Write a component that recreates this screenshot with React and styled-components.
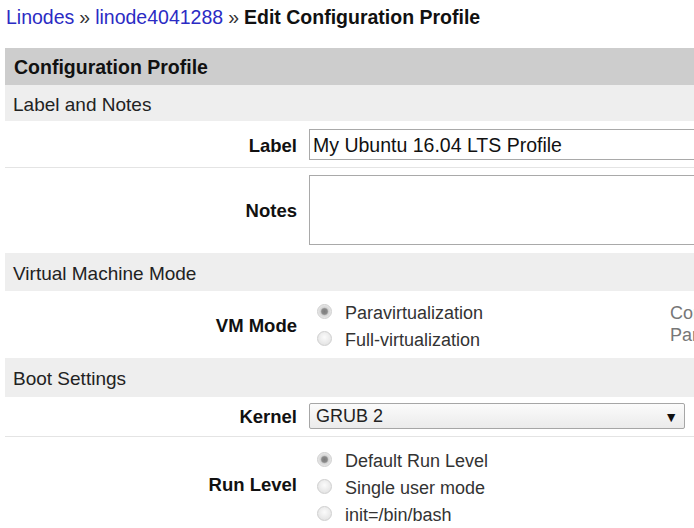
import React from "react";
import styled, { createGlobalStyle } from "styled-components";

const GlobalStyle = createGlobalStyle`
  html, body {
    margin: 0;
    padding: 0;
    background: #fff;
    overflow: hidden;
  }
  body {
    font-family: "Liberation Sans", Arial, sans-serif;
    color: #111;
  }
`;

const Page = styled.div`
  width: 1000px;
  padding-left: 5px;
`;

const Breadcrumb = styled.div`
  font-size: 19.5px;
  line-height: 24px;
  padding: 5px 0 0 1px;
  height: 48px;
  box-sizing: border-box;
`;

const Crumb = styled.a`
  color: #2b2bc4;
  text-decoration: none;
`;

const Sep = styled.span`
  color: #333;
  margin: 0 5px;
`;

const Current = styled.strong`
  font-weight: bold;
  color: #111;
`;

const Panel = styled.div`
  display: flex;
  flex-direction: column;
`;

const PanelHeader = styled.div`
  background: #cdcdcd;
  height: 37px;
  box-sizing: border-box;
  display: flex;
  align-items: center;
  padding: 2px 0 0 9px;
  font-size: 19.5px;
  font-weight: bold;
`;

const Section = styled.div`
  background: #eeeeee;
  height: ${(p) => p.$h || 38}px;
  box-sizing: border-box;
  display: flex;
  align-items: center;
  padding: 3px 0 0 8px;
  font-size: 19px;
  color: #222;
`;

const Field = styled.div`
  display: grid;
  grid-template-columns: 292px 349px 1fr;
  column-gap: 12px;
  align-items: center;
  padding: ${(p) => p.$pad || "8px 0"};
  border-bottom: ${(p) => (p.$divider ? "1px solid #e4e4e4" : "none")};
`;

const FieldLabel = styled.div`
  text-align: right;
  font-weight: bold;
  font-size: 18.5px;
  color: #111;
  margin-top: ${(p) => p.$shift || 2}px;
`;

const Wide = styled.div`
  grid-column: 2 / -1;
`;

const TextInput = styled.input`
  box-sizing: border-box;
  width: 100%;
  height: 31px;
  border: 1px solid #a9a9a9;
  padding: 2px 3px 0;
  font-family: "Liberation Sans", Arial, sans-serif;
  font-size: 19.5px;
  color: #111;
  outline: none;
`;

const TextArea = styled.textarea`
  display: block;
  box-sizing: border-box;
  width: 100%;
  height: 70px;
  border: 1px solid #a9a9a9;
  resize: none;
  outline: none;
`;

const Options = styled.div`
  display: flex;
  flex-direction: column;
`;

const Option = styled.label`
  display: flex;
  align-items: center;
  height: 27px;
  font-size: 18px;
  color: #333;
`;

const Radio = styled.input.attrs({ type: "radio" })`
  appearance: none;
  width: 15px;
  height: 15px;
  margin: 0 13px 5px 8px;
  border-radius: 50%;
  border: 1px solid #cfcfcf;
  background: radial-gradient(circle at 50% 40%, #fbfbfb 0%, #e6e6e6 70%, #d8d8d8 100%);
  box-sizing: border-box;

  &:checked {
    background: radial-gradient(circle, #7d7d7d 0%, #8a8a8a 30%, #d4d4d4 45%, #ececec 75%, #dcdcdc 100%);
  }
`;

const Description = styled.div`
  font-size: 18px;
  line-height: 22px;
  color: #777;
  white-space: nowrap;
  margin-top: -6px;
`;

const Select = styled.div`
  box-sizing: border-box;
  width: 376px;
  height: 26px;
  border: 1px solid #a6a6a6;
  border-radius: 2px;
  background: linear-gradient(#fbfbfb, #ebebeb);
  display: flex;
  align-items: center;
  justify-content: space-between;
  padding: 1px 6px 0 6px;
  font-size: 18px;
  color: #222;
`;

const Arrow = styled.span`
  font-size: 14px;
  color: #111;
`;

function RadioGroup({ name, options }) {
  return (
    <Options>
      {options.map((o, i) => (
        <Option key={o}>
          <Radio name={name} defaultChecked={i === 0} />
          {o}
        </Option>
      ))}
    </Options>
  );
}

export default function App() {
  return (
    <Page>
      <GlobalStyle />
      <Breadcrumb>
        <Crumb href="#">Linodes</Crumb>
        <Sep>»</Sep>
        <Crumb href="#">linode4041288</Crumb>
        <Sep>»</Sep>
        <Current>Edit Configuration Profile</Current>
      </Breadcrumb>

      <Panel>
        <PanelHeader>Configuration Profile</PanelHeader>
        <Section $h={36}>Label and Notes</Section>

        <Field $divider $pad="8px 0 7px">
          <FieldLabel>Label</FieldLabel>
          <Wide>
            <TextInput defaultValue="My Ubuntu 16.04 LTS Profile" />
          </Wide>
        </Field>
        <Field $pad="7px 0 8px">
          <FieldLabel>Notes</FieldLabel>
          <Wide>
            <TextArea />
          </Wide>
        </Field>

        <Section>Virtual Machine Mode</Section>
        <Field $pad="9px 0 4px">
          <FieldLabel $shift={-2}>VM Mode</FieldLabel>
          <RadioGroup name="vm" options={["Paravirtualization", "Full-virtualization"]} />
          <Description>
            Controls if devices inside your virtual machine are
            <br />
            Paravirtualized or fully virtualized
          </Description>
        </Field>

        <Section $h={39}>Boot Settings</Section>
        <Field $divider $pad="6px 0 7px">
          <FieldLabel>Kernel</FieldLabel>
          <Wide>
            <Select>
              GRUB 2
              <Arrow>▼</Arrow>
            </Select>
          </Wide>
        </Field>
        <Field $pad="11px 0 6px">
          <FieldLabel $shift={-8}>Run Level</FieldLabel>
          <RadioGroup
            name="run"
            options={["Default Run Level", "Single user mode", "init=/bin/bash"]}
          />
        </Field>
      </Panel>
    </Page>
  );
}
